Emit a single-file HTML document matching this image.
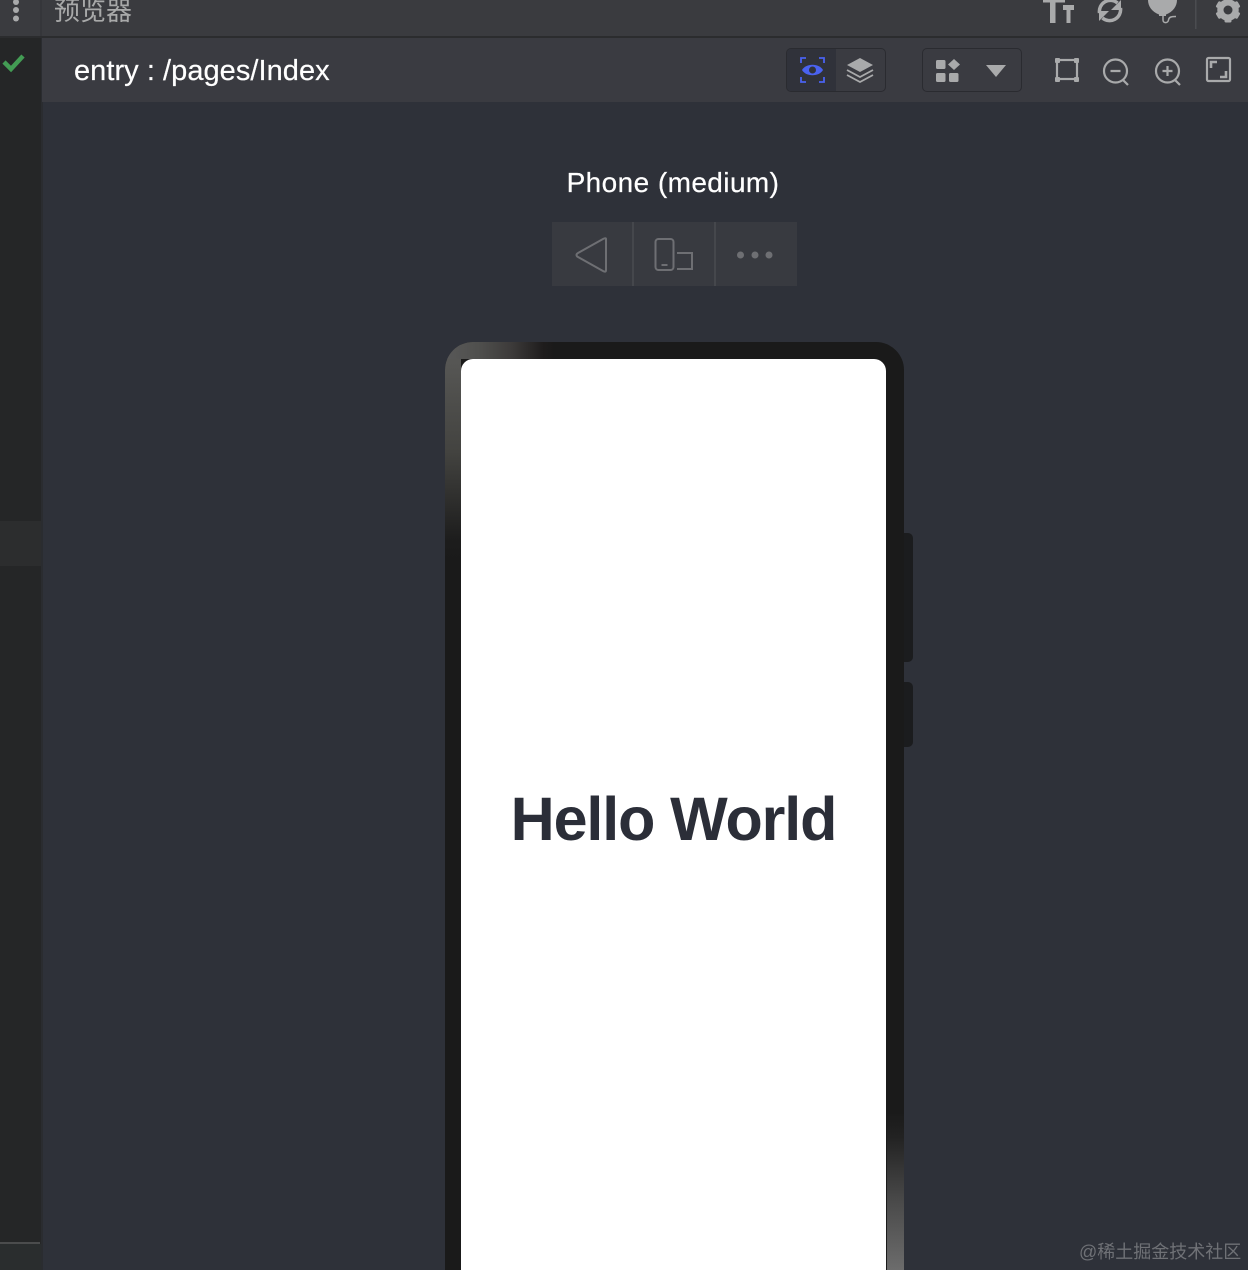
<!DOCTYPE html>
<html>
<head>
<meta charset="utf-8">
<style>
html,body{margin:0;padding:0;width:1248px;height:1270px;overflow:hidden;background:#2e3139;}
body{position:relative;font-family:"Liberation Sans","Noto Sans CJK SC",sans-serif;}
.a{position:absolute;}
</style>
</head>
<body>
<!-- left gutter -->
<div class="a" style="left:0;top:38px;width:41px;height:1232px;background:#252627;"></div>
<div class="a" style="left:0;top:521px;width:41px;height:45px;background:#2c2d2e;"></div>
<div class="a" style="left:0;top:1242px;width:40px;height:2px;background:#4b4c4d;"></div>
<div class="a" style="left:0;top:1244px;width:41px;height:26px;background:#2a2d2e;"></div>
<div class="a" style="left:41px;top:38px;width:2px;height:1232px;background:#2a2c30;"></div>
<!-- title bar -->
<div class="a" style="left:0;top:0;width:1248px;height:36px;background:#3a3b3f;"></div>
<div class="a" style="left:0;top:36px;width:1248px;height:2px;background:#2b2c2e;"></div>
<div class="a" style="left:40px;top:0;width:2px;height:36px;background:#35363a;"></div>
<!-- toolbar -->
<div class="a" style="left:42px;top:38px;width:1206px;height:64px;background:#3a3b41;"></div>
<!-- dots -->
<svg class="a" style="left:0;top:0" width="40" height="30"><g fill="#a9aaab"><circle cx="16" cy="2" r="3"/><circle cx="16" cy="10" r="3"/><circle cx="16" cy="18.500" r="3"/></g></svg>
<div class="a" style="left:54px;top:-6px;font-size:26px;line-height:34px;color:#a8a9a9;white-space:nowrap;">预览器</div>
<!-- check -->
<svg class="a" style="left:0;top:50px" width="30" height="26"><path d="M4 12 L11 19 L23 6" fill="none" stroke="#439c54" stroke-width="4.500"/></svg>
<div class="a" style="left:74px;top:53px;font-size:29px;line-height:36px;color:#fff;white-space:nowrap;letter-spacing:.05px;-webkit-text-stroke:.2px #fff;">entry : /pages/Index</div>

<!-- top right icons -->
<svg class="a" style="left:1030px;top:0" width="218" height="36">
  <g fill="#a9aaab">
    <path d="M13 0H35V2.500H25.500V23H20V2.500H13Z"/>
    <path d="M33 5H44V10H40.500V23H36.500V10H33Z"/>
    <path d="M118 0H147C147 6 143 12 136 14.500V16H129V14.500C122 12 118 6 118 0Z"/>
  </g>
  <path d="M133 15V20C133 23.500 138 23.500 138.500 20C139 17 141 16.500 146 16.500" fill="none" stroke="#a9aaab" stroke-width="1.500"/>
  <path d="M69.500 13A11 11 0 0 1 87.500 3M90.500 8A11 11 0 0 1 72.500 18" fill="none" stroke="#a9aaab" stroke-width="3.500"/>
  <path d="M91 0V10H81ZM69 21V11H79Z" fill="#a9aaab"/>
  <rect x="165" y="0" width="1.500" height="29" fill="#4b4c50"/>
  <g transform="translate(198 10)">
    <circle r="8" fill="none" stroke="#a9aaab" stroke-width="5.500"/>
    <g fill="#a9aaab">
      <rect x="-3.500" y="-12.500" width="7" height="25" rx="1.500"/>
      <rect x="-3.500" y="-12.500" width="7" height="25" rx="1.500" transform="rotate(60)"/>
      <rect x="-3.500" y="-12.500" width="7" height="25" rx="1.500" transform="rotate(120)"/>
    </g>
    <circle r="4.500" fill="#3a3b3f"/>
  </g>
</svg>

<!-- toolbar buttons -->
<div class="a" style="left:786px;top:48px;width:98px;height:42px;border:1px solid #2a2b30;border-radius:5px;background:#3a3b41;overflow:hidden;">
  <div style="width:49px;height:42px;background:#30323a;"></div>
</div>
<svg class="a" style="left:786px;top:48px" width="100" height="44">
  <path d="M15 15V10H20M33 10H38V15M38 29V34H33M20 34H15V29" fill="none" stroke="#4a62f0" stroke-width="1.800"/>
  <path d="M16 22C20 15 33 15 37 22C33 29 20 29 16 22Z" fill="#4a62f0"/>
  <circle cx="26.500" cy="22" r="3.500" fill="#30323a"/>
  <path d="M74 10L87 17L74 24L61 17Z" fill="#a9aaab"/>
  <path d="M61 22L74 29L87 22M61 27L74 34L87 27" fill="none" stroke="#a9aaab" stroke-width="1.800"/>
</svg>
<div class="a" style="left:922px;top:48px;width:98px;height:42px;border:1px solid #2a2b30;border-radius:5px;"></div>
<svg class="a" style="left:922px;top:48px" width="100" height="44">
  <g fill="#a9aaab">
    <rect x="14" y="12" width="9.500" height="9" rx="1.500"/>
    <path d="M32 11L38 16.500L32 22L26 16.500Z"/>
    <rect x="14" y="25" width="9.500" height="9" rx="1.500"/>
    <rect x="27" y="25" width="9.500" height="9" rx="1.500"/>
    <path d="M64 17H84L74 29Z"/>
  </g>
</svg>
<svg class="a" style="left:1050px;top:50px" width="190" height="40" fill="none" stroke="#a9aaab" stroke-width="2.200">
  <rect x="7" y="10" width="20" height="19"/>
  <g fill="#a9aaab" stroke="none"><rect x="5" y="8" width="5" height="5" rx="1"/><rect x="24" y="8" width="5" height="5" rx="1"/><rect x="5" y="27" width="5" height="5" rx="1"/><rect x="24" y="27" width="5" height="5" rx="1"/></g>
  <circle cx="65.500" cy="21" r="11.500"/><path d="M60.500 21H70.500M73 30L78 35"/>
  <circle cx="117.500" cy="21" r="11.500"/><path d="M112.500 21H122.500M117.500 16V26M125 30L130 35"/>
  <rect x="157" y="8" width="23" height="23" rx="1.500"/>
  <path d="M161 18V12H167M176 21V27H170" stroke-width="2.600"/>
</svg>

<!-- device label -->
<div class="a" style="left:473px;width:400px;top:165px;font-size:28px;line-height:36px;color:#fff;text-align:center;white-space:nowrap;letter-spacing:.42px;-webkit-text-stroke:.2px #fff;">Phone (medium)</div>
<div class="a" style="left:552px;top:222px;width:245px;height:64px;background:#383a40;"></div>
<div class="a" style="left:632px;top:222px;width:2px;height:64px;background:#45474c;"></div>
<div class="a" style="left:714px;top:222px;width:2px;height:64px;background:#45474c;"></div>
<svg class="a" style="left:552px;top:222px" width="245" height="64" fill="none" stroke="#6e6f73" stroke-width="2">
  <path d="M54 17V48C54 50 53 50 51 49L26 35C24 34 24 32 26 31L51 17C53 16 54 16 54 17Z"/>
  <rect x="103.500" y="17" width="18" height="31" rx="3"/>
  <path d="M109.500 43H115.500"/>
  <path d="M125 31H140V47H125"/>
  <g fill="#6e6f73" stroke="none"><circle cx="188.500" cy="33" r="3.500"/><circle cx="203" cy="33" r="3.500"/><circle cx="217" cy="33" r="3.500"/></g>
</svg>

<!-- phone -->
<div class="a" style="left:904px;top:533px;width:9px;height:129px;background:#1b1c1e;border-radius:0 5px 5px 0;"></div>
<div class="a" style="left:904px;top:682px;width:9px;height:65px;background:#1b1c1e;border-radius:0 5px 5px 0;"></div>
<div class="a" style="left:445px;top:342px;width:459px;height:960px;border-radius:28px 28px 0 0;background:#1a1a1a;overflow:hidden;">
  <div class="a" style="left:0;top:0;width:16px;height:220px;background:linear-gradient(180deg,#585858 0,#565654 20px,#434340 110px,#1c1c1c 200px,#1a1a1a 220px);"></div>
  <div class="a" style="left:0;top:0;width:110px;height:17px;background:linear-gradient(90deg,#585858 0,#50504e 30%,#3d3b3a 60%,#1e1c1c 90%,#1a1a1a 100%);"></div>
  <div class="a" style="right:0;top:770px;width:17px;height:158px;background:linear-gradient(180deg,#1a1a1a 0,#222 25px,#4a4a4a 90px,#6c6c6c 158px);"></div>
</div>
<div class="a" style="left:461px;top:359px;width:425px;height:911px;background:#fff;border-radius:12px 12px 0 0;"></div>
<div class="a" style="left:461px;top:783px;width:425px;text-align:center;font-size:61px;line-height:72px;font-weight:700;color:#2b2e38;white-space:nowrap;letter-spacing:-1.1px;">Hello World</div>

<!-- watermark -->
<div class="a" style="left:1079px;top:1240px;font-size:18px;line-height:24px;color:#6f7176;white-space:nowrap;">@稀土掘金技术社区</div>
</body>
</html>
